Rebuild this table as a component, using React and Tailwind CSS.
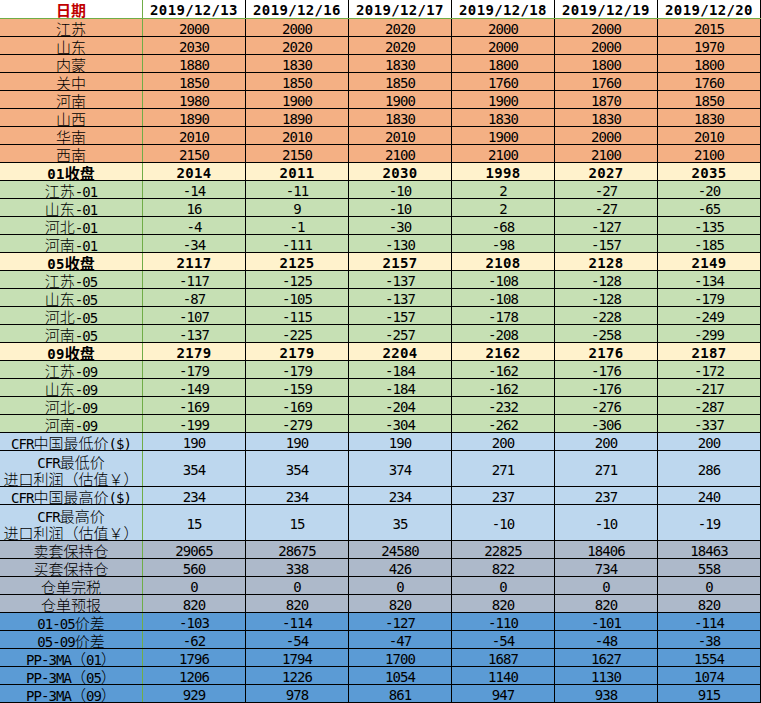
import React from "react";

const DATES = ["2019/12/13", "2019/12/16", "2019/12/17", "2019/12/18", "2019/12/19", "2019/12/20"];

const OR = "bg-[#F4B084]";
const YE = "bg-[#FFF2CC]";
const GR = "bg-[#C6E0B4]";
const LB = "bg-[#BDD7EE]";
const GY = "bg-[#ADB9CA]";
const BL = "bg-[#5B9BD5]";

const ROWS = [
  { l: ["江苏"], v: [2000, 2000, 2020, 2000, 2000, 2015], bg: OR },
  { l: ["山东"], v: [2030, 2020, 2020, 2000, 2000, 1970], bg: OR },
  { l: ["内蒙"], v: [1880, 1830, 1830, 1800, 1800, 1800], bg: OR },
  { l: ["关中"], v: [1850, 1850, 1850, 1760, 1760, 1760], bg: OR },
  { l: ["河南"], v: [1980, 1900, 1900, 1900, 1870, 1850], bg: OR },
  { l: ["山西"], v: [1890, 1890, 1830, 1830, 1830, 1830], bg: OR },
  { l: ["华南"], v: [2010, 2010, 2010, 1900, 2000, 2010], bg: OR },
  { l: ["西南"], v: [2150, 2150, 2100, 2100, 2100, 2100], bg: OR },
  { l: ["01收盘"], v: [2014, 2011, 2030, 1998, 2027, 2035], bg: YE, b: true },
  { l: ["江苏-01"], v: [-14, -11, -10, 2, -27, -20], bg: GR },
  { l: ["山东-01"], v: [16, 9, -10, 2, -27, -65], bg: GR },
  { l: ["河北-01"], v: [-4, -1, -30, -68, -127, -135], bg: GR },
  { l: ["河南-01"], v: [-34, -111, -130, -98, -157, -185], bg: GR },
  { l: ["05收盘"], v: [2117, 2125, 2157, 2108, 2128, 2149], bg: YE, b: true },
  { l: ["江苏-05"], v: [-117, -125, -137, -108, -128, -134], bg: GR },
  { l: ["山东-05"], v: [-87, -105, -137, -108, -128, -179], bg: GR },
  { l: ["河北-05"], v: [-107, -115, -157, -178, -228, -249], bg: GR },
  { l: ["河南-05"], v: [-137, -225, -257, -208, -258, -299], bg: GR },
  { l: ["09收盘"], v: [2179, 2179, 2204, 2162, 2176, 2187], bg: YE, b: true },
  { l: ["江苏-09"], v: [-179, -179, -184, -162, -176, -172], bg: GR },
  { l: ["山东-09"], v: [-149, -159, -184, -162, -176, -217], bg: GR },
  { l: ["河北-09"], v: [-169, -169, -204, -232, -276, -287], bg: GR },
  { l: ["河南-09"], v: [-199, -279, -304, -262, -306, -337], bg: GR },
  { l: ["CFR中国最低价($)"], v: [190, 190, 190, 200, 200, 200], bg: LB },
  { l: ["CFR最低价", "进口利润（估值￥）"], v: [354, 354, 374, 271, 271, 286], bg: LB },
  { l: ["CFR中国最高价($)"], v: [234, 234, 234, 237, 237, 240], bg: LB },
  { l: ["CFR最高价", "进口利润（估值￥）"], v: [15, 15, 35, -10, -10, -19], bg: LB },
  { l: ["卖套保持仓"], v: [29065, 28675, 24580, 22825, 18406, 18463], bg: GY },
  { l: ["买套保持仓"], v: [560, 338, 426, 822, 734, 558], bg: GY },
  { l: ["仓单完税"], v: [0, 0, 0, 0, 0, 0], bg: GY },
  { l: ["仓单预报"], v: [820, 820, 820, 820, 820, 820], bg: GY },
  { l: ["01-05价差"], v: [-103, -114, -127, -110, -101, -114], bg: BL },
  { l: ["05-09价差"], v: [-62, -54, -47, -54, -48, -38], bg: BL },
  { l: ["PP-3MA（01）"], v: [1796, 1794, 1700, 1687, 1627, 1554], bg: BL },
  { l: ["PP-3MA（05）"], v: [1206, 1226, 1054, 1140, 1130, 1074], bg: BL },
  { l: ["PP-3MA（09）"], v: [929, 978, 861, 947, 938, 915], bg: BL },
];

const LAT = "font-['DejaVu_Sans_Mono',monospace] text-[14px] tracking-[-0.93px] font-normal";
const LATB = "font-['DejaVu_Sans_Mono',monospace] text-[14px] tracking-[0.35px] font-bold";

function Mixed({ text, bold }) {
  const parts = text.split(/([\x00-\x7f]+)/).filter((p) => p.length);
  return (
    <div
      className={
        "h-[17px] shrink-0 whitespace-nowrap font-['Noto_Sans_CJK_SC',sans-serif] text-[15px] leading-[17px] " +
        (bold ? "font-bold" : "font-light")
      }
    >
      {parts.map((p, i) =>
        /^[\x00-\x7f]+$/.test(p) ? (
          <span key={i} className={(bold ? LATB : LAT) + " leading-[17px]"}>{p}</span>
        ) : (
          <span key={i}>{p}</span>
        )
      )}
    </div>
  );
}

export default function App() {
  return (
    <div className="w-[761px] bg-white text-black">
      <div className="flex h-[19px] border-b border-[#70AD47] bg-white">
        <div className="flex w-[143px] shrink-0 items-center justify-center border-r border-[#70AD47] pt-[1px]">
          <span className="font-['Noto_Sans_CJK_SC',sans-serif] text-[15px] font-bold leading-[17px] text-[#C00000]">日期</span>
        </div>
        {DATES.map((d) => (
          <div key={d} className="flex w-[103px] shrink-0 items-center justify-center border-r border-black pt-[3px]">
            <span className={LATB + " leading-[17px]"}>{d}</span>
          </div>
        ))}
      </div>
      {ROWS.map((r, i) => {
        const tall = r.l.length > 1;
        return (
          <div key={i} className={`flex border-b border-black ${r.bg} ${tall ? "h-[36px]" : "h-[18px]"}`}>
            <div
              className={`flex w-[143px] shrink-0 flex-col items-center justify-center border-r border-[#70AD47] ${
                tall ? "pt-[2px]" : "pt-[1px]"
              }`}
            >
              {r.l.map((t, j) => (
                <Mixed key={j} text={t} bold={r.b} />
              ))}
            </div>
            {r.v.map((v, j) => (
              <div key={j} className="flex w-[103px] shrink-0 items-center justify-center border-r border-black pt-[3px]">
                <span className={(r.b ? LATB : LAT) + " leading-[17px]"}>{v}</span>
              </div>
            ))}
          </div>
        );
      })}
    </div>
  );
}
